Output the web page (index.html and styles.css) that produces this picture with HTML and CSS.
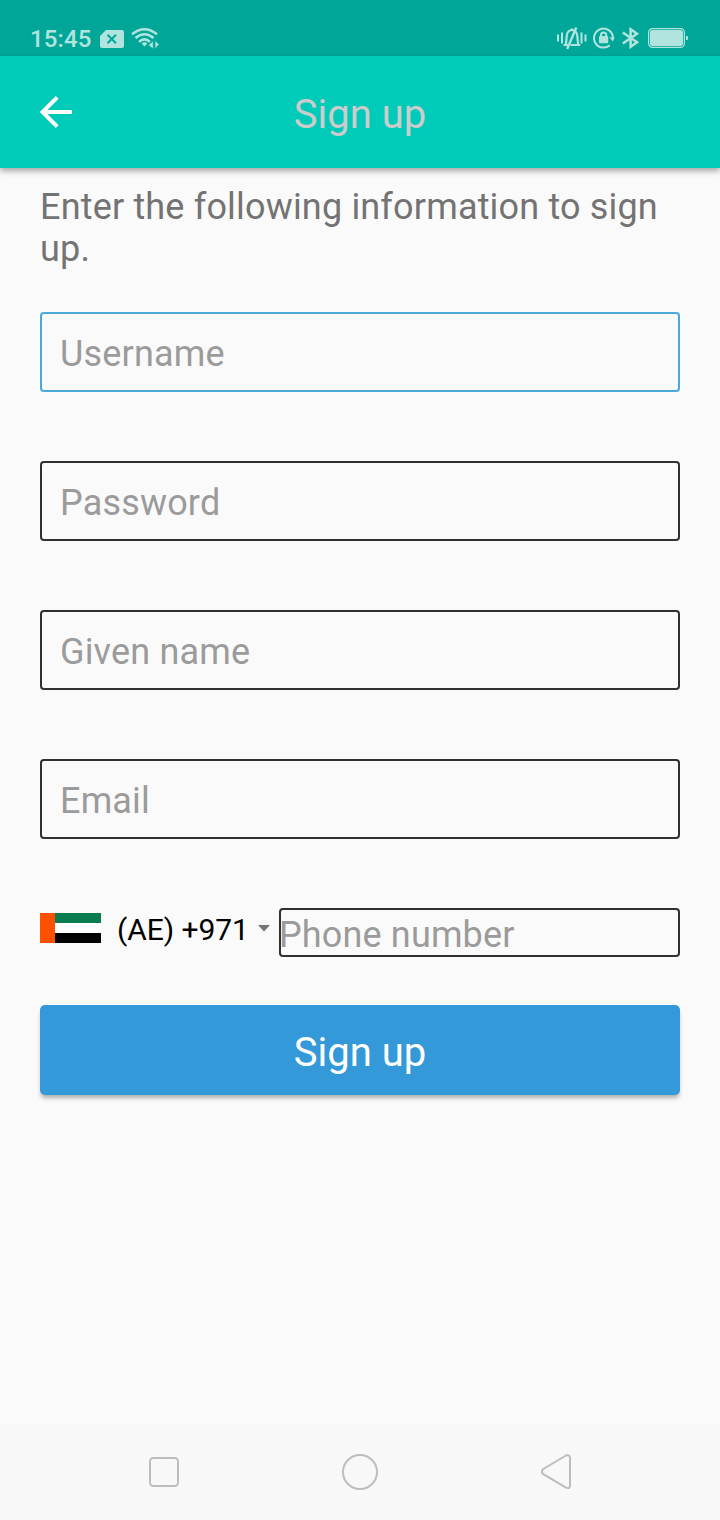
FILE: index.html
```html
<!DOCTYPE html>
<html lang="en">
<head>
<meta charset="utf-8">
<title>Sign up</title>
<link rel="stylesheet" href="styles.css">
</head>
<body>
<div class="screen">
  <div class="status">
    <span class="clock">15:45</span>
    <svg class="sim" width="24" height="18" viewBox="0 0 24 18"><path d="M6 0H22Q24 0 24 2V16Q24 18 22 18H2Q0 18 0 16V6Z" fill="#b2e4df"/><path d="M7.500 4.800l8.500 8.500M16 4.800l-8.500 8.500" stroke="#00a798" stroke-width="2"/></svg>
    <svg class="wifi" width="29" height="23" viewBox="0 0 29 23" fill="none" stroke="#b2e4df" stroke-width="2.500"><path d="M1 7.200Q13.500-2.800 26 7.200M4.500 11Q13.500 3.600 22.500 11M8 14.900Q13.500 9.900 19 14.900"/><path d="M13.500 15.200Q11.700 15.200 10.700 16.500L13.500 19.500 16.300 16.500Q15.300 15.200 13.500 15.200Z" fill="#b2e4df" stroke="none"/><path d="M22.300 13.500V22.200L17.300 18.200ZM23.900 22.200V13.500L28.300 17.300Z" fill="#b2e4df" stroke="#00a798" stroke-width=".9"/></svg>
    <span class="spacer"></span>
    <svg class="silent" width="30" height="24" viewBox="0 0 30 24" fill="none" stroke="#b2e4df" stroke-width="2"><path d="M1 8.500v7M5 6.500v11M24.500 6.500v11M28.500 8.500v7"/><path d="M6.500 19H11M8.800 19.500L9.800 9.500Q10.500 4.200 15 4Q19.500 4.200 20.200 9.500L21.200 19.500M13.500 19H23.300M15 2.500V4" stroke-width="2.200"/><path d="M10.200 23L19.300 1.500" stroke-width="2.300"/></svg>
    <svg class="lock" width="22" height="22" viewBox="0 0 22 22" fill="none" stroke="#b2e4df" stroke-width="2"><path d="M16.800 18.200A9.500 9.500 0 1 1 20 10.500"/><path d="M16.500 10.200H21.800L19.900 14.500Z" fill="#b2e4df" stroke="none"/><rect x="6" y="9" width="9.200" height="7.200" rx="1" fill="#b2e4df" stroke="none"/><path d="M8 9.500V8a2.600 2.600 0 0 1 5.200 0V9.500"/></svg>
    <svg class="bt" width="18" height="22" viewBox="0 0 18 22" fill="none" stroke="#b2e4df" stroke-width="2.500"><path d="M.8 5.500L15 15.300 8.600 19.800V2.200L15 6.700.8 16.500"/></svg>
    <svg class="battery" width="41" height="20" viewBox="0 0 41 20"><rect x=".6" y=".6" width="35.800" height="18.800" rx="4" fill="none" stroke="#b2e4df" stroke-width="1.200"/><rect x="2" y="2" width="33" height="16" rx="2.500" fill="#b2e4df"/><path d="M38 8h1q1 0 1 1v2q0 1-1 1h-1z" fill="#b2e4df"/></svg>
  </div>
  <header class="bar">
    <svg class="back" width="32" height="32" viewBox="0 0 32 32" fill="none" stroke="#fff" stroke-width="4"><path d="M32 16H3M17.200 1.400L2.600 16 17.200 30.600"/></svg>
    <h1 class="title">Sign up</h1>
  </header>
  <main class="form">
    <p class="intro">Enter the following information to sign up.</p>
    <div class="field active">Username</div>
    <div class="field">Password</div>
    <div class="field">Given name</div>
    <div class="field">Email</div>
    <div class="phone">
      <svg class="flag" width="61" height="30" viewBox="0 0 61 30"><path fill="#fff" d="M15 0h46v30H15z"/><path fill="#0b7b50" d="M15 0h46v10H15z"/><path d="M15 20h46v10H15z"/><path fill="#ff4f00" d="M0 0h15v30H0z"/></svg>
      <span class="code">(AE) +971</span>
      <svg class="caret" width="12" height="7" viewBox="0 0 12 7"><path d="M0 0h12L6 6.500z" fill="#737373"/></svg>
      <div class="number">Phone number</div>
    </div>
    <div class="submit">Sign up</div>
  </main>
  <nav class="nav">
    <svg class="recent" width="30" height="30" viewBox="0 0 30 30"><rect x="1" y="1" width="28" height="28" rx="3.500" fill="none" stroke="#bdbdbd" stroke-width="2"/></svg>
    <svg class="home" width="36" height="36" viewBox="0 0 36 36"><circle cx="18" cy="18" r="17" fill="none" stroke="#bdbdbd" stroke-width="2"/></svg>
    <svg class="prev" width="31" height="36" viewBox="0 0 31 36"><path d="M25 1.500L2.300 15Q-.5 17.500 2.300 20.200L25 33.600Q29 35 29 31.500V4Q29 .5 25 1.500Z" fill="none" stroke="#bdbdbd" stroke-width="2"/></svg>
  </nav>
</div>
</body>
</html>
```
FILE: styles.css
```css
* { box-sizing: border-box; }
body { margin: 0; background: #fafafa; font-family: Roboto, sans-serif; }
svg { display: block; flex: none; }
.screen { width: 720px; height: 1520px; display: flex; flex-direction: column; }
.status { height: 56px; flex: none; display: flex; align-items: flex-start; padding: 0 31px 0 30px; background: #00a798; }
.clock { width: 70px; margin-top: 24px; font-size: 24px; line-height: 30px; font-weight: 500; letter-spacing: .15px; color: #b2e4df; }
.sim { margin-top: 30px; }
.wifi { margin: 27px 0 0 7px; }
.spacer { flex: 1; }
.silent { margin-top: 26px; }
.lock { margin: 27px 0 0 6px; }
.bt { margin: 27px 0 0 7px; }
.battery { margin: 28px 0 0 8px; }
.bar { height: 112px; flex: none; display: grid; grid-template-columns: 32px 1fr 32px; align-items: center; padding: 0 40px; background: #00cbb9; box-shadow: 0 3px 6px rgba(0, 0, 0, .34); }
.title { margin: 5px 0 0; text-align: center; font-size: 40px; line-height: 48px; font-weight: 400; color: #ccc; }
.form { flex: 1; padding: 18px 40px 0; }
.intro { margin: 0 0 42px; font-size: 36px; line-height: 42px; letter-spacing: .175px; color: #737373; }
.field { height: 80px; margin-bottom: 69px; padding: 2px 18px 0; border: 2px solid #303030; border-radius: 4px; font-size: 36px; line-height: 76px; letter-spacing: .17px; color: #9b9b9b; }
.active { border-color: #4ba9d9; }
.phone { display: flex; height: 49px; }
.flag { margin-top: 5px; }
.code { width: 141px; padding-left: 16px; font-size: 30px; line-height: 43px; letter-spacing: -.05px; white-space: nowrap; color: #000; }
.caret { margin: 17px 9px 0 16px; }
.number { flex: 1; border: 2px solid #303030; border-radius: 4px; font-size: 36px; line-height: 51px; letter-spacing: .15px; color: #9b9b9b; text-indent: -2px; white-space: nowrap; }
.submit { height: 90px; margin-top: 48px; border-radius: 5px; background: #3399d8; box-shadow: 0 4px 4px -1px rgba(0, 0, 0, .3); text-align: center; font-size: 40px; line-height: 96px; color: #fff; }
.nav { height: 96px; flex: none; display: flex; align-items: center; background: #f8f8f8; }
.recent { margin-left: 149px; }
.home { margin-left: 163px; }
.prev { margin-left: 163px; }
```
